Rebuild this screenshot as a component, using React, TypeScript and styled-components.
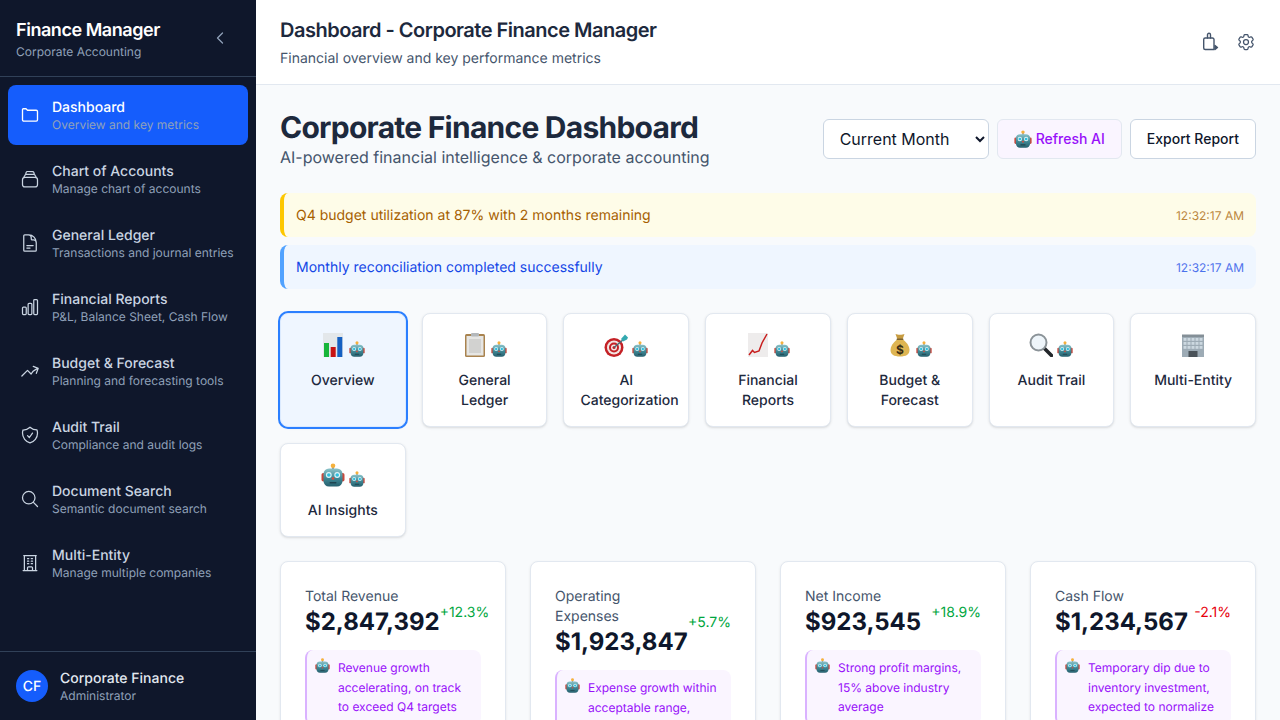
import React from "react";
import styled, { createGlobalStyle } from "styled-components";
import {
    HiOutlineDocumentText,
    HiOutlineChartBar,
    HiOutlineArrowTrendingUp,
    HiOutlineShieldCheck,
    HiOutlineMagnifyingGlass,
    HiOutlineBuildingOffice,
    HiOutlineCog6Tooth,
} from "react-icons/hi2";
import { ChevronLeft } from "lucide-react";

const FolderIcon = ({ size }: { size: number }) => (
    <svg width={size} height={size} viewBox="0 0 24 24" fill="none" stroke="currentColor" strokeWidth="1.6" strokeLinejoin="round">
        <path d="M3 5.5C3 4.9 3.4 4.5 4 4.5h3.2L9 6.3h10.5c.8 0 1.5.7 1.5 1.5v10c0 .9-.7 1.5-1.5 1.5h-15C3.700 19.300 3 18.700 3 17.800z" />
    </svg>
);

const StackIcon = ({ size }: { size: number }) => (
    <svg width={size} height={size} viewBox="0 0 24 24" fill="none" stroke="currentColor" strokeWidth="1.5" strokeLinejoin="round">
        <rect x="3" y="10" width="18" height="11.500" rx="3" />
        <path d="M4.500 10.200l1.200-2.400a2 2 0 0 1 1.800-1.300h9a2 2 0 0 1 1.800 1.300l1.200 2.400" />
        <path d="M6.800 6.500l.6-2.400a1.600 1.600 0 0 1 1.500-1.100h6.200a1.600 1.600 0 0 1 1.500 1.100l.6 2.400" />
    </svg>
);

const Robot = ({ size }: { size: number }) => (
    <svg width={size} height={size} viewBox="0 0 24 24">
        <defs>
            <linearGradient id="robotHead" x1="0" y1="0" x2="0" y2="1">
                <stop offset="0" stopColor="#8cc3c9" />
                <stop offset="0.55" stopColor="#3f8794" />
                <stop offset="1" stopColor="#27606e" />
            </linearGradient>
        </defs>
        <rect x="0.500" y="10" width="4" height="8.500" rx="1.800" fill="#c8483c" />
        <rect x="19.500" y="10" width="4" height="8.500" rx="1.800" fill="#c8483c" />
        <rect x="11" y="3" width="2" height="4" fill="#8a8f92" />
        <circle cx="12" cy="2.800" r="2.300" fill="#f5b13d" />
        <rect x="2.500" y="5.500" width="19" height="18" rx="5.500" fill="url(#robotHead)" />
        <circle cx="7.800" cy="12" r="2.900" fill="#dff4f7" />
        <circle cx="16.200" cy="12" r="2.900" fill="#dff4f7" />
        <circle cx="7.800" cy="12" r="1.800" fill="#2fbfe0" />
        <circle cx="16.200" cy="12" r="1.800" fill="#2fbfe0" />
        <circle cx="12" cy="15.500" r="1.300" fill="#dc4b3c" />
        <rect x="8.500" y="19" width="7" height="1.500" rx="0.700" fill="#1f4450" />
    </svg>
);

const ChartEmoji = () => (
    <svg width="24" height="24" viewBox="0 0 24 24">
        <rect x="2" y="0" width="20" height="24" fill="#e3e7ea" />
        <rect x="3" y="10" width="5" height="14" fill="#16b53a" />
        <rect x="9.700" y="14" width="5" height="10" fill="#c81212" />
        <rect x="16.300" y="4" width="5" height="20" fill="#1560c2" />
    </svg>
);

const ClipboardEmoji = () => (
    <svg width="24" height="24" viewBox="0 0 24 24">
        <rect x="2" y="1" width="20" height="23" rx="1.500" fill="#a9834f" />
        <rect x="3.500" y="3" width="17" height="19.500" fill="#e6e6e4" />
        <rect x="6" y="6" width="12" height="14" fill="#d2d2d0" />
        <rect x="8" y="0" width="8" height="3.500" rx="1" fill="#b4b8bb" />
    </svg>
);

const TargetEmoji = () => (
    <svg width="24" height="24" viewBox="0 0 24 24">
        <circle cx="10" cy="14.500" r="9.500" fill="#c42126" />
        <circle cx="10" cy="14.500" r="7" fill="#f3e5e2" />
        <circle cx="10" cy="14.500" r="5" fill="#c42126" />
        <circle cx="10" cy="14.500" r="3" fill="#f3e5e2" />
        <circle cx="10" cy="14.500" r="1.500" fill="#c42126" />
        <path d="M10 14.500L20 6" stroke="#4a6a73" strokeWidth="1.400" />
        <path d="M17 6l4-4.500 3 3-1 2-4 2z" fill="#33a9b0" />
    </svg>
);

const TrendEmoji = () => (
    <svg width="24" height="24" viewBox="0 0 24 24">
        <rect x="2" y="0" width="20" height="24" fill="#eeecec" />
        <path d="M3 22l3.500-4.500 2 2 4.500-1.500 3-8 5-9" fill="none" stroke="#c81e1e" strokeWidth="1.500" />
    </svg>
);

const MoneyEmoji = () => (
    <svg width="24" height="24" viewBox="0 0 24 24">
        <path d="M7.500 1c2 1 7 1 9 0l-2 5.500h-5z" fill="#c79c40" />
        <path d="M9 6.500h6c4 3 6.500 7 6.500 10.500 0 4.500-3.500 6.500-9.500 6.500S2.500 21.500 2.500 17c0-3.500 2.500-7.500 6.500-10.500z" fill="#deb552" />
        <rect x="8.500" y="5.500" width="7" height="1.500" rx="0.700" fill="#7d6330" />
        <text x="12" y="20.500" textAnchor="middle" fontSize="12" fontWeight="700" fontFamily="Inter" fill="#3a2c12">$</text>
    </svg>
);

const SearchEmoji = () => (
    <svg width="24" height="24" viewBox="0 0 24 24">
        <path d="M15 15l7.500 7.500" stroke="#23272b" strokeWidth="3.600" strokeLinecap="round" />
        <circle cx="9.500" cy="9.500" r="8" fill="#eef5fa" stroke="#8b9398" strokeWidth="2" />
    </svg>
);

const OfficeEmoji = () => (
    <svg width="24" height="24" viewBox="0 0 24 24">
        <rect x="1" y="3" width="22" height="21" fill="#9dabb5" />
        <rect x="1" y="1.500" width="22" height="2.500" fill="#848f97" />
        {[5, 9, 13].map((y) =>
            [2.500, 6.500, 10.500, 14.500, 18.500].map((x) => <rect key={`${x}-${y}`} x={x} y={y} width="3" height="2.800" fill="#ccd8e0" />)
        )}
        <rect x="7.500" y="18" width="9" height="6" fill="#4a5258" />
    </svg>
);

const emojiIcons = {
    chart: ChartEmoji,
    clipboard: ClipboardEmoji,
    target: TargetEmoji,
    trend: TrendEmoji,
    money: MoneyEmoji,
    search: SearchEmoji,
    office: OfficeEmoji,
    robot: () => <Robot size={24} />,
};

const navItems = [
    { icon: FolderIcon, title: "Dashboard", sub: "Overview and key metrics", active: true },
    { icon: StackIcon, title: "Chart of Accounts", sub: "Manage chart of accounts" },
    { icon: HiOutlineDocumentText, title: "General Ledger", sub: "Transactions and journal entries" },
    { icon: HiOutlineChartBar, title: "Financial Reports", sub: "P&L, Balance Sheet, Cash Flow" },
    { icon: HiOutlineArrowTrendingUp, title: "Budget & Forecast", sub: "Planning and forecasting tools" },
    { icon: HiOutlineShieldCheck, title: "Audit Trail", sub: "Compliance and audit logs" },
    { icon: HiOutlineMagnifyingGlass, title: "Document Search", sub: "Semantic document search" },
    { icon: HiOutlineBuildingOffice, title: "Multi-Entity", sub: "Manage multiple companies" },
];

const tabs: { icon: keyof typeof emojiIcons; label: string; ai?: boolean; active?: boolean }[] = [
    { icon: "chart", label: "Overview", ai: true, active: true },
    { icon: "clipboard", label: "General Ledger", ai: true },
    { icon: "target", label: "AI Categorization", ai: true },
    { icon: "trend", label: "Financial Reports", ai: true },
    { icon: "money", label: "Budget & Forecast", ai: true },
    { icon: "search", label: "Audit Trail", ai: true },
    { icon: "office", label: "Multi-Entity" },
    { icon: "robot", label: "AI Insights", ai: true },
];

const stats = [
    { label: "Total Revenue", value: "$2,847,392", change: "+12.3%", up: true, note: "Revenue growth accelerating, on track to exceed Q4 targets" },
    { label: "Operating Expenses", value: "$1,923,847", change: "+5.7%", up: true, note: "Expense growth within acceptable range, monitoring closely" },
    { label: "Net Income", value: "$923,545", change: "+18.9%", up: true, note: "Strong profit margins, 15% above industry average" },
    { label: "Cash Flow", value: "$1,234,567", change: "-2.1%", up: false, note: "Temporary dip due to inventory investment, expected to normalize" },
];

const App = () => {
    return (
        <Layout>
            <GlobalStyle />
            <Sidebar>
                <Brand>
                    <div>
                        <BrandName>Finance Manager</BrandName>
                        <BrandSub>Corporate Accounting</BrandSub>
                    </div>
                    <CollapseButton>
                        <ChevronLeft size={20} strokeWidth={1.5} />
                    </CollapseButton>
                </Brand>
                <Nav>
                    {navItems.map((item) => (
                        <NavItem key={item.title} $active={item.active}>
                            <item.icon size={20} />
                            <div>
                                <NavTitle>{item.title}</NavTitle>
                                <NavSub>{item.sub}</NavSub>
                            </div>
                        </NavItem>
                    ))}
                </Nav>
                <Profile>
                    <Avatar>CF</Avatar>
                    <div>
                        <ProfileName>Corporate Finance</ProfileName>
                        <ProfileRole>Administrator</ProfileRole>
                    </div>
                </Profile>
            </Sidebar>
            <Main>
                <TopBar>
                    <div>
                        <TopTitle>Dashboard - Corporate Finance Manager</TopTitle>
                        <TopSub>Financial overview and key performance metrics</TopSub>
                    </div>
                    <TopActions>
                        <IconButton>
                            <svg width="20" height="20" viewBox="0 0 20 20" fill="none" stroke="currentColor" strokeWidth="1.4" strokeLinecap="round" strokeLinejoin="round">
                                <path d="M7.500 6V2.800a1.500 1.500 0 0 1 3 0V6" />
                                <path d="M3.700 7.500A1.500 1.500 0 0 1 5.200 6h7.300A1.500 1.500 0 0 1 14 7.500v10H5.200a1.500 1.500 0 0 1-1.500-1.500z" />
                                <path d="M15 13.500l2.500 2-2.500 2z" fill="currentColor" />
                            </svg>
                        </IconButton>
                        <IconButton>
                            <HiOutlineCog6Tooth size={20} />
                        </IconButton>
                    </TopActions>
                </TopBar>
                <Content>
                    <PageHead>
                        <div>
                            <PageTitle>Corporate Finance Dashboard</PageTitle>
                            <PageSub>AI-powered financial intelligence &amp; corporate accounting</PageSub>
                        </div>
                        <PageActions>
                            <PeriodSelect defaultValue="Current Month">
                                <option>Current Month</option>
                                <option>Last Month</option>
                                <option>Quarter to Date</option>
                            </PeriodSelect>
                            <AiButton>
                                <Robot size={18} />
                                Refresh AI
                            </AiButton>
                            <ExportButton>Export Report</ExportButton>
                        </PageActions>
                    </PageHead>
                    <Alerts>
                        <Alert $tone="warning">
                            <span>Q4 budget utilization at 87% with 2 months remaining</span>
                            <AlertTime>12:32:17 AM</AlertTime>
                        </Alert>
                        <Alert $tone="info">
                            <span>Monthly reconciliation completed successfully</span>
                            <AlertTime>12:32:17 AM</AlertTime>
                        </Alert>
                    </Alerts>
                    <TabGrid>
                        {tabs.map((tab) => {
                            const TabIcon = emojiIcons[tab.icon];
                            return (
                                <Tab key={tab.label} $active={tab.active}>
                                    <TabIcons>
                                        <TabIcon />
                                        {tab.ai && <Robot size={16} />}
                                    </TabIcons>
                                    <TabLabel>{tab.label}</TabLabel>
                                </Tab>
                            );
                        })}
                    </TabGrid>
                    <StatGrid>
                        {stats.map((stat) => (
                            <StatCard key={stat.label}>
                                <StatHead>
                                    <div>
                                        <StatLabel>{stat.label}</StatLabel>
                                        <StatValue>{stat.value}</StatValue>
                                    </div>
                                    <StatChange $up={stat.up}>{stat.change}</StatChange>
                                </StatHead>
                                <Insight>
                                    <InsightIcon>
                                        <Robot size={15} />
                                    </InsightIcon>
                                    <span>{stat.note}</span>
                                </Insight>
                            </StatCard>
                        ))}
                    </StatGrid>
                </Content>
            </Main>
        </Layout>
    );
};

export default App;

const GlobalStyle = createGlobalStyle`
    html, body {
        margin: 0;
        height: 100%;
        overflow: hidden;
    }
    * {
        box-sizing: border-box;
    }
    body {
        font-family: Inter, "Noto Sans", sans-serif;
        text-rendering: geometricPrecision;
        -webkit-font-smoothing: antialiased;
        background: #f8fafc;
    }
`;

const Layout = styled.div`
    display: flex;
    width: 1280px;
    height: 720px;
    overflow: hidden;
`;

const Sidebar = styled.aside`
    display: flex;
    flex-direction: column;
    width: 256px;
    flex-shrink: 0;
    background: #0f172b;
    color: #cad5e2;
`;

const Brand = styled.div`
    display: flex;
    justify-content: space-between;
    align-items: center;
    height: 77px;
    padding: 0 16px;
    border-bottom: 1px solid #314158;
`;

const BrandName = styled.div`
    padding-top: 1px;
    margin-bottom: -1px;
    font-size: 18px;
    line-height: 28px;
    font-weight: 600;
    letter-spacing: -0.025em;
    color: #ffffff;
`;

const BrandSub = styled.div`
    font-size: 12px;
    line-height: 16px;
    color: #90a1b9;
`;

const CollapseButton = styled.div`
    display: flex;
    align-items: center;
    justify-content: center;
    width: 40px;
    height: 32px;
    color: #90a1b9;
`;

const Nav = styled.nav`
    flex: 1;
    padding: 8px;
`;

const NavItem = styled.div<{ $active?: boolean }>`
    display: flex;
    align-items: center;
    gap: 12px;
    height: 60px;
    margin-bottom: 4px;
    padding: 0 12px;
    border-radius: 8px;
    background: ${(props) => (props.$active ? "#155dfc" : "transparent")};
    color: ${(props) => (props.$active ? "#ffffff" : "#cad5e2")};
`;

const NavTitle = styled.div`
    padding-top: 1px;
    margin-bottom: -1px;
    font-size: 14px;
    line-height: 20px;
    font-weight: 500;
`;

const NavSub = styled.div`
    font-size: 12px;
    line-height: 16px;
    color: #90a1b9;
`;

const Profile = styled.div`
    display: flex;
    align-items: center;
    gap: 12px;
    height: 69px;
    padding: 0 16px;
    border-top: 1px solid #314158;
`;

const Avatar = styled.div`
    display: flex;
    align-items: center;
    justify-content: center;
    width: 32px;
    height: 32px;
    border-radius: 50%;
    background: #155dfc;
    color: #ffffff;
    font-size: 14px;
    font-weight: 500;
`;

const ProfileName = styled.div`
    padding-top: 1px;
    margin-bottom: -1px;
    font-size: 14px;
    line-height: 20px;
    font-weight: 500;
    color: #e2e8f0;
`;

const ProfileRole = styled.div`
    font-size: 12px;
    line-height: 16px;
    color: #90a1b9;
`;

const Main = styled.main`
    flex: 1;
    min-width: 0;
    display: flex;
    flex-direction: column;
`;

const TopBar = styled.header`
    display: flex;
    justify-content: space-between;
    align-items: center;
    height: 85px;
    flex-shrink: 0;
    padding: 0 24px;
    background: #ffffff;
    border-bottom: 1px solid #e2e8f0;
`;

const TopTitle = styled.h1`
    margin: 0;
    font-size: 20px;
    line-height: 28px;
    font-weight: 600;
    letter-spacing: -0.025em;
    color: #1d293d;
`;

const TopSub = styled.p`
    margin: 5px 0 -1px;
    font-size: 14px;
    line-height: 20px;
    color: #45556c;
`;

const TopActions = styled.div`
    display: flex;
    gap: 16px;
`;

const IconButton = styled.div`
    display: flex;
    align-items: center;
    justify-content: center;
    width: 20px;
    height: 20px;
    color: #45556c;
`;

const Content = styled.div`
    flex: 1;
    padding: 24px;
    overflow: hidden;
`;

const PageHead = styled.div`
    display: flex;
    justify-content: space-between;
    align-items: flex-start;
    margin-bottom: 24px;
`;

const PageTitle = styled.h2`
    margin: 0 0 -1px;
    padding-top: 1px;
    font-size: 30px;
    line-height: 36px;
    font-weight: 700;
    letter-spacing: -0.025em;
    color: #1d293d;
`;

const PageSub = styled.p`
    margin: 0;
    font-size: 16px;
    line-height: 24px;
    color: #45556c;
`;

const PageActions = styled.div`
    display: flex;
    gap: 8px;
    margin-top: 10px;
`;

const PeriodSelect = styled.select`
    height: 40px;
    width: 166px;
    padding: 0 12px;
    border: 1px solid #cad5e2;
    border-radius: 6px;
    background: #ffffff;
    color: #0f172b;
    font-family: inherit;
    font-size: 16px;
`;

const AiButton = styled.button`
    display: inline-flex;
    align-items: center;
    gap: 4px;
    height: 40px;
    padding: 0 16px 1px;
    border: 1px solid #e2e8f0;
    border-radius: 6px;
    background: #faf5ff;
    color: #9810fa;
    font-family: inherit;
    font-size: 14px;
    font-weight: 500;
`;

const ExportButton = styled.button`
    height: 40px;
    padding: 0 16px 2px;
    border: 1px solid #cad5e2;
    border-radius: 6px;
    background: #ffffff;
    color: #0f172b;
    font-family: inherit;
    font-size: 14px;
    font-weight: 500;
`;

const Alerts = styled.div`
    display: flex;
    flex-direction: column;
    gap: 8px;
    margin-bottom: 24px;
`;

const Alert = styled.div<{ $tone: "warning" | "info" }>`
    display: flex;
    justify-content: space-between;
    align-items: center;
    height: 44px;
    padding: 0 12px;
    border-left: 4px solid ${(props) => (props.$tone === "warning" ? "#fdc700" : "#51a2ff")};
    border-radius: 8px;
    background: ${(props) => (props.$tone === "warning" ? "#fefce8" : "#eff6ff")};
    color: ${(props) => (props.$tone === "warning" ? "#a65f00" : "#1447e6")};
    font-size: 14px;
`;

const AlertTime = styled.span`
    font-size: 12px;
    opacity: 0.75;
`;

const TabGrid = styled.div`
    display: grid;
    grid-template-columns: repeat(7, minmax(0, 1fr));
    gap: 16px;
    margin-bottom: 24px;
`;

const Tab = styled.div<{ $active?: boolean }>`
    min-width: 0;
    padding: 16px;
    border-radius: 8px;
    border: 1px solid ${(props) => (props.$active ? "#dbeafe" : "#e2e8f0")};
    background: ${(props) => (props.$active ? "#eff6ff" : "#ffffff")};
    box-shadow: ${(props) => (props.$active ? "0 0 0 2px #2b7fff, " : "")}0 1px 3px 0 rgba(0, 0, 0, 0.1), 0 1px 2px -1px rgba(0, 0, 0, 0.1);
    color: #1d293d;
`;

const TabIcons = styled.div`
    display: flex;
    justify-content: center;
    align-items: flex-end;
    gap: 4px;
    height: 24px;
    margin: 3px 0 13px;
`;

const TabLabel = styled.div`
    padding-top: 1px;
    margin-bottom: -1px;
    font-size: 14px;
    line-height: 20px;
    font-weight: 500;
    text-align: center;
`;

const StatGrid = styled.div`
    display: grid;
    grid-template-columns: repeat(4, minmax(0, 1fr));
    gap: 24px;
`;

const StatCard = styled.div`
    min-width: 0;
    padding: 24px;
    border: 1px solid #e2e8f0;
    border-radius: 8px;
    background: #ffffff;
    box-shadow: 0 1px 3px 0 rgba(0, 0, 0, 0.08);
`;

const StatHead = styled.div`
    display: flex;
    justify-content: space-between;
    align-items: center;
    margin-bottom: 12px;
`;

const StatLabel = styled.div`
    padding-top: 1px;
    margin-bottom: -1px;
    font-size: 14px;
    line-height: 20px;
    font-weight: 400;
    color: #45556c;
`;

const StatValue = styled.div`
    font-size: 24px;
    line-height: 32px;
    font-weight: 700;
    color: #0f172b;
`;

const StatChange = styled.div<{ $up?: boolean }>`
    font-size: 14px;
    flex-shrink: 0;
    color: ${(props) => (props.$up ? "#00a63e" : "#e7000b")};
`;

const Insight = styled.div`
    display: flex;
    gap: 8px;
    padding: 8px 12px 8px 8px;
    border-left: 2px solid #dab2ff;
    border-radius: 8px;
    background: #faf5ff;
    color: #9810fa;
    font-size: 12px;
    line-height: 19.5px;
`;

const InsightIcon = styled.span`
    display: block;
    flex-shrink: 0;
    height: 15px;
`;
